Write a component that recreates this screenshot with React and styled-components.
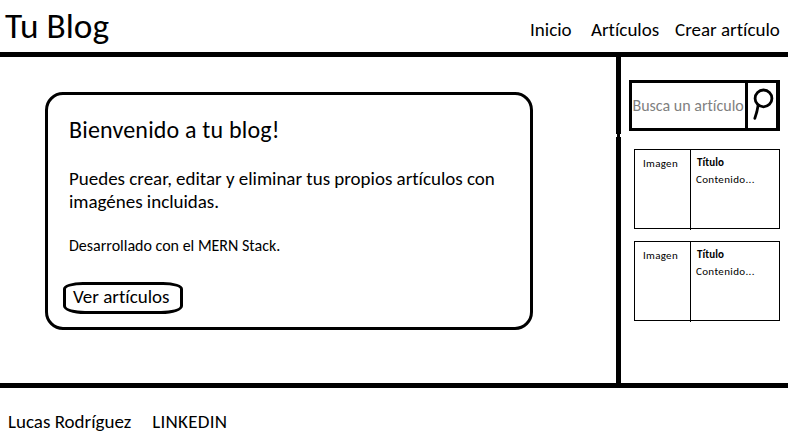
import React from 'react';
import styled, { createGlobalStyle } from 'styled-components';

const GlobalStyle = createGlobalStyle`
  *, *::before, *::after { box-sizing: border-box; }
  body {
    margin: 0;
    background: #fff;
    color: #000;
    font-family: Carlito, Calibri, Lato, sans-serif;
    font-size: 19px;
    line-height: 24px;
    font-variant-ligatures: none;
    overflow: hidden;
  }
  h1, h2, h3, p { margin: 0; font-weight: 400; }
  a { color: inherit; text-decoration: none; white-space: nowrap; }
`;

const Page = styled.div`
  display: flex;
  flex-direction: column;
  width: 788px;
  height: 446px;
`;

const Header = styled.header`
  display: flex;
  justify-content: space-between;
  height: 57px;
  padding: 6px 6px 0 5px;
  border-bottom: 5px solid #000;
`;

const Brand = styled.h1`
  font-size: 35.3px;
  line-height: 40px;
`;

const Nav = styled.nav`
  display: grid;
  grid-template-columns: 61px 84px 107px;
  padding-top: 12px;
`;

const Body = styled.div`
  display: flex;
  height: 326px;
`;

const Main = styled.main`
  width: 616px;
  padding: 35px 0 0 45px;
`;

const Welcome = styled.section`
  display: flex;
  flex-direction: column;
  align-items: flex-start;
  width: 488px;
  height: 238px;
  padding: 20px 15px 0;
  border: 3px solid #000;
  border-radius: 18px;
`;

const WelcomeTitle = styled.h2`
  padding-left: 6px;
  font-size: 24px;
  line-height: 30px;
  letter-spacing: 0.18px;
`;

const Lead = styled.p`
  margin-top: 22px;
  padding-left: 6px;
  line-height: 23px;
  letter-spacing: -0.02px;
`;

const Credit = styled.p`
  margin-top: 21px;
  padding-left: 6px;
  font-size: 16px;
`;

const Button = styled.button`
  width: 120px;
  height: 32px;
  margin-top: 24px;
  padding: 0 0 2px 7px;
  border: 3px solid #000;
  border-radius: 20px 20px 22px 22px / 7px 7px 8px 8px;
  background: none;
  color: inherit;
  font: inherit;
  font-variant-ligatures: none;
  text-align: left;
`;

const Sidebar = styled.aside`
  position: relative;
  display: flex;
  flex-direction: column;
  width: 172px;
  padding: 23px 8px 0;
  border-left: 5px solid #000;

  /* Small nick in the hand-drawn divider */
  &::before {
    content: '';
    position: absolute;
    left: -5px;
    top: 77px;
    width: 5px;
    height: 3px;
    border: solid #fff;
    border-width: 0 1px;
  }
`;

const SearchBox = styled.div`
  display: flex;
  width: 151px;
  height: 51px;
  border: 3px solid #000;
  border-right-width: 4px;
`;

const SearchText = styled.span`
  width: 113px;
  padding-left: 0.5px;
  font-size: 16px;
  line-height: 45px;
  color: #7f7f7f;
  white-space: nowrap;
`;

const SearchIcon = styled.div`
  width: 31px;
  border-left: 3px solid #000;

  svg { display: block; }
`;

const Articles = styled.div`
  display: flex;
  flex-direction: column;
  gap: 12px;
  padding: 18px 0 0 5px;
`;

const Article = styled.article`
  display: flex;
  width: 146px;
  height: 80px;
  border: 1px solid #000;
  font-size: 11px;
  line-height: 14px;
`;

const Thumb = styled.div`
  width: 55px;
  padding: 7px 0 0 8px;
  letter-spacing: 0.3px;
`;

const Summary = styled.div`
  height: 80px;
  padding: 6px 0 0 5px;
  border-left: 1px solid #000;
`;

const ArticleTitle = styled.h3`
  font-size: 11px;
  font-weight: 700;
  padding-left: 1px;
  letter-spacing: 0.1px;
`;

const Excerpt = styled.p`
  margin-top: 3px;
  letter-spacing: 0.35px;
`;

const Footer = styled.footer`
  display: flex;
  gap: 21px;
  height: 63px;
  padding: 22px 8px 0;
  border-top: 5px solid #000;
`;

const ProfileLink = styled.a`
  letter-spacing: 0.25px;
`;

const articles = [
  { id: 1, image: 'Imagen', title: 'Título', text: 'Contenido...' },
  { id: 2, image: 'Imagen', title: 'Título', text: 'Contenido...' },
];

export default function App() {
  return (
    <Page>
      <GlobalStyle />
      <Header>
        <Brand>Tu Blog</Brand>
        <Nav>
          <a>Inicio</a>
          <a>Artículos</a>
          <a>Crear artículo</a>
        </Nav>
      </Header>
      <Body>
        <Main>
          <Welcome>
            <WelcomeTitle>Bienvenido a tu blog!</WelcomeTitle>
            <Lead>
              Puedes crear, editar y eliminar tus propios artículos con
              <br />
              imagénes incluidas.
            </Lead>
            <Credit>Desarrollado con el MERN Stack.</Credit>
            <Button>Ver artículos</Button>
          </Welcome>
        </Main>
        <Sidebar>
          <SearchBox>
            <SearchText>Busca un artículo</SearchText>
            <SearchIcon>
              <svg width="28" height="45" viewBox="0 0 28 45" fill="none" stroke="#000" strokeWidth="2.8" strokeLinecap="round">
                <circle cx="15.5" cy="15.4" r="8.4" />
                <path d="M10.2 22 L8.8 29 L6.8 35.4" />
              </svg>
            </SearchIcon>
          </SearchBox>
          <Articles>
            {articles.map((a) => (
              <Article key={a.id}>
                <Thumb>{a.image}</Thumb>
                <Summary>
                  <ArticleTitle>{a.title}</ArticleTitle>
                  <Excerpt>{a.text}</Excerpt>
                </Summary>
              </Article>
            ))}
          </Articles>
        </Sidebar>
      </Body>
      <Footer>
        <span>Lucas Rodríguez</span>
        <ProfileLink>LINKEDIN</ProfileLink>
      </Footer>
    </Page>
  );
}
